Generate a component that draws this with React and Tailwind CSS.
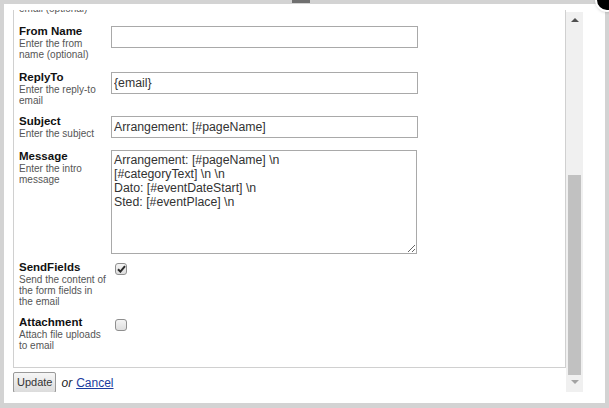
const FONT = { fontFamily: '"Liberation Sans", Arial, sans-serif' };

const MESSAGE =
  'Arrangement: [#pageName] \\n\n[#categoryText] \\n \\n\nDato: [#eventDateStart] \\n\nSted: [#eventPlace] \\n';

function Label({ title, lines }) {
  return (
    <div className="w-[92px] shrink-0">
      <div className="text-[11.5px] leading-[14px] font-bold text-[#111]">{title}</div>
      {lines.map((l) => (
        <div key={l} className="text-[10px] leading-[11px] text-[#555]">
          {l}
        </div>
      ))}
    </div>
  );
}

function TextInput({ value }) {
  return (
    <input
      type="text"
      defaultValue={value}
      className="mt-[2px] w-[307px] h-[22px] border border-[#a9a9a9] px-[2px] text-[12.3px] text-[#333] outline-none"
      style={FONT}
    />
  );
}

function Check({ checked, mt }) {
  return (
    <span
      className={`ml-[4px] ${mt} w-[12px] h-[12px] rounded-[3px] border border-[#8f8f8f] bg-gradient-to-b from-[#f4f4f4] to-[#dedede] flex items-center justify-center`}
    >
      {checked ? (
        <svg width="9" height="8" viewBox="0 0 9 8">
          <path d="M1 4.2 L3.4 6.6 L8 1.2" fill="none" stroke="#2a2a2a" strokeWidth="2" />
        </svg>
      ) : null}
    </span>
  );
}

export default function App() {
  return (
    <div className="relative w-[609px] h-[408px] overflow-hidden bg-[#d3d3d3] pt-[4px] pl-[4px]" style={FONT}>
      <div className="absolute left-[292px] top-0 w-[18px] h-[3px] bg-[#707070]" />

      <div className="w-[601px] h-[399px] bg-white pt-[6px] pl-[9px]">
        <div className="flex h-[382px]">
          <div className="w-[553px] flex flex-col overflow-hidden">
            <div className="-mt-[4px] border-l border-r border-b border-[#d0d0d0] pl-[5px] pb-[16px]">
              <div className="-mt-[3px] text-[10px] leading-[11px] text-[#555]">email (optional)</div>

              <div className="mt-[10px] flex items-start">
                <Label title="From Name" lines={['Enter the from', 'name (optional)']} />
                <TextInput value="" />
              </div>

              <div className="mt-[10px] flex items-start">
                <Label title="ReplyTo" lines={['Enter the reply-to', 'email']} />
                <TextInput value="{email}" />
              </div>

              <div className="mt-[8px] flex items-start">
                <Label title="Subject" lines={['Enter the subject']} />
                <TextInput value="Arrangement: [#pageName]" />
              </div>

              <div className="mt-[10px] flex items-start">
                <Label title="Message" lines={['Enter the intro', 'message']} />
                <textarea
                  defaultValue={MESSAGE}
                  className="mt-[1px] w-[306px] h-[104px] border border-[#a9a9a9] px-[2px] py-[2px] text-[12.3px] leading-[14px] text-[#333] outline-none"
                  style={{ ...FONT, resize: 'both' }}
                />
              </div>

              <div className="mt-[6px] flex items-start">
                <Label title="SendFields" lines={['Send the content of', 'the form fields in', 'the email']} />
                <Check checked mt="mt-[3px]" />
              </div>

              <div className="mt-[8px] flex items-start">
                <Label title="Attachment" lines={['Attach file uploads', 'to email']} />
                <Check checked={false} mt="mt-[4px]" />
              </div>
            </div>

            <div className="mt-[4px] flex items-center">
              <button
                type="button"
                className="h-[21px] px-[3px] border border-[#999] rounded-[2px] bg-gradient-to-b from-[#f6f6f6] to-[#dcdcdc] text-[11px] text-[#333]"
                style={FONT}
              >
                Update
              </button>
              <span className="ml-[5px] text-[12px] italic text-[#222]">or</span>
              <a href="#" className="ml-[4px] text-[12px] text-[#1a3ca0] underline">
                Cancel
              </a>
            </div>
          </div>

          <div className="w-[17px] mt-[2px] h-[380px] bg-[#f0f0f0] flex flex-col items-center">
            <div className="mt-[6px] w-0 h-0 border-l-[4px] border-r-[4px] border-b-[4px] border-l-transparent border-r-transparent border-b-[#505050]" />
            <div className="mt-[153px] w-[13px] h-[200px] bg-[#c1c1c1]" />
            <div className="mt-[5px] w-0 h-0 border-l-[4px] border-r-[4px] border-t-[4px] border-l-transparent border-r-transparent border-t-[#a3a3a3]" />
          </div>
        </div>
      </div>

      <div className="absolute -right-[10px] -top-[12px] w-[24px] h-[24px] rounded-full bg-black border-[2px] border-white shadow" />
    </div>
  );
}
